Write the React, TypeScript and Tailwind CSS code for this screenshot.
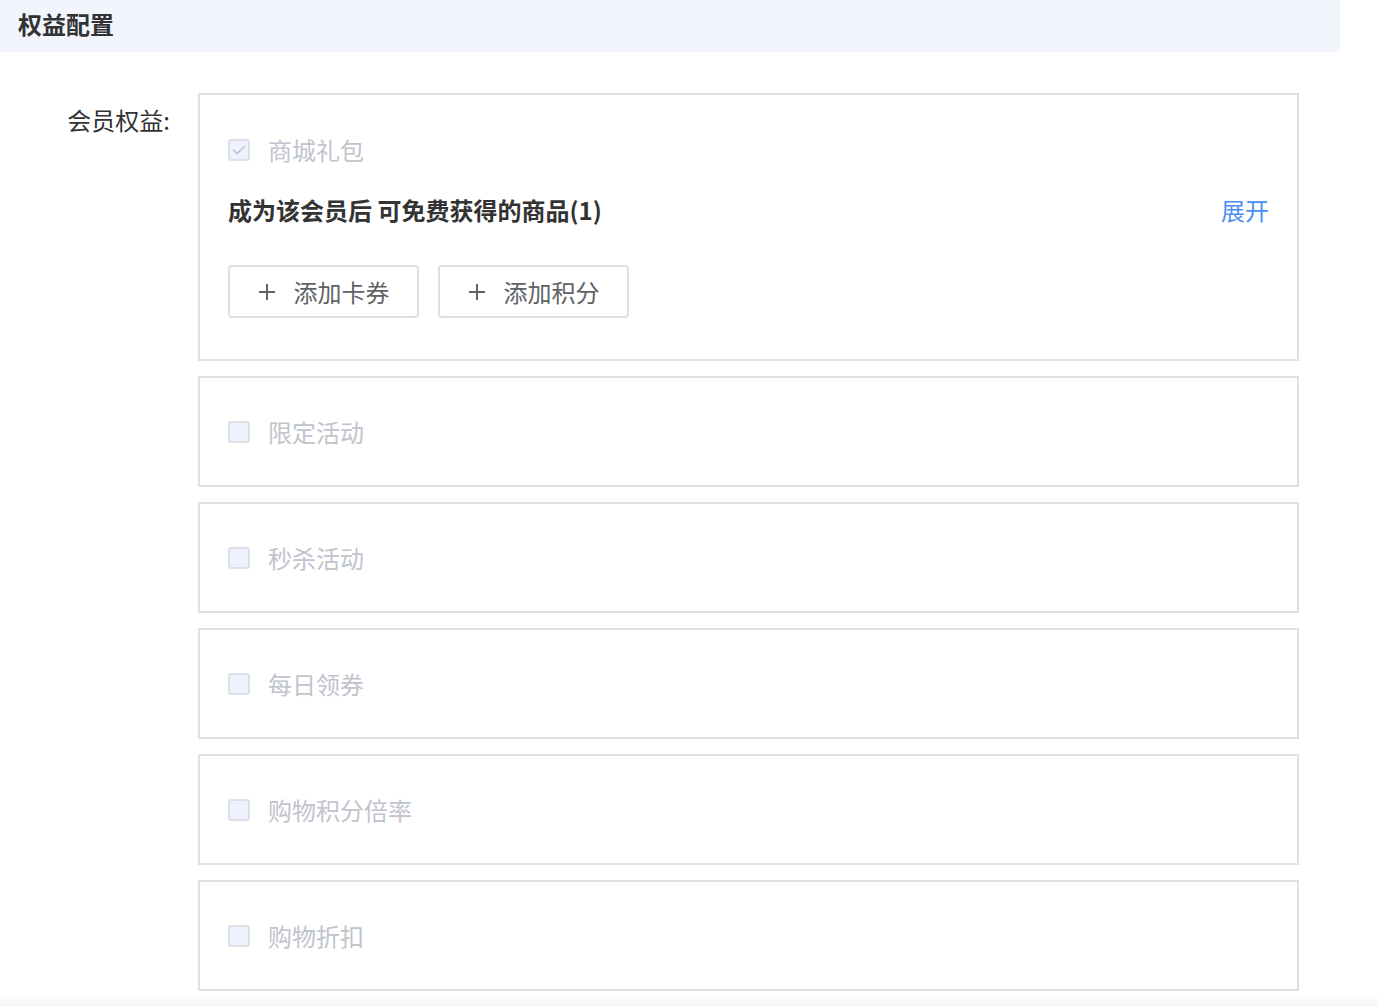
import React from "react";

const font = { fontFamily: '"Noto Sans CJK SC", "Noto Sans", sans-serif' };

function Checkbox({ checked }: { checked?: boolean }) {
  return (
    <span className="flex h-[22px] w-[22px] shrink-0 items-center justify-center rounded-[3px] border-2 border-[#dcdfe6] bg-[#edf2fc]">
      {checked && (
        <svg width="16" height="16" viewBox="0 0 16 16" fill="none">
          <path d="M2.5 8.2l3.5 3.3L13.5 4.5" stroke="#b8bcc4" strokeWidth="1.4" strokeLinecap="round" strokeLinejoin="round" />
        </svg>
      )}
    </span>
  );
}

function Plus() {
  return (
    <svg width="18" height="18" viewBox="0 0 18 18" fill="none">
      <path d="M9 1v16M1 9h16" stroke="#606266" strokeWidth="2" />
    </svg>
  );
}

function AddButton({ label }: { label: string }) {
  return (
    <button className="flex h-[53px] w-[191px] items-center justify-center gap-[18px] rounded-[4px] border-2 border-[#dcdfe6] bg-white text-[24px] leading-[32px] text-[#606266]">
      <Plus />
      <span>{label}</span>
    </button>
  );
}

function Row({ label }: { label: string }) {
  return (
    <div className="h-[111px] border-2 border-[#dfe1e6] pl-[28px] pt-[38px]">
      <div className="flex items-center gap-[18px]">
        <Checkbox />
        <span className="text-[24px] leading-[32px] text-[#c0c4cc]">{label}</span>
      </div>
    </div>
  );
}

export default function App() {
  return (
    <div style={font} className="relative h-[1006px] w-full overflow-hidden bg-white">
      <div className="flex h-[52px] w-[1340px] items-center bg-[#f2f6fc] pb-[4px] pl-[18px]">
        <span className="text-[24px] font-bold leading-[30px] text-[#333]">权益配置</span>
      </div>
      <div className="mt-[41px] flex">
        <div className="w-[170px] pt-[11px] text-right text-[24px] leading-[32px] text-[#333]">会员权益:</div>
        <div className="ml-[28px] flex w-[1101px] flex-col gap-[15px]">
          <div className="border-2 border-[#dfe1e6] pb-[41px] pl-[28px] pr-[28px] pt-[39px]">
            <div className="flex items-center gap-[18px]">
              <Checkbox checked />
              <span className="text-[24px] leading-[32px] text-[#c0c4cc]">商城礼包</span>
            </div>
            <div className="mt-[28px] flex items-center justify-between">
              <span className="text-[24px] font-bold leading-[32px] text-[#333]">成为该会员后 可免费获得的商品(1)</span>
              <span className="text-[24px] leading-[32px] text-[#4d8ef6]">展开</span>
            </div>
            <div className="mt-[39px] flex gap-[19px]">
              <AddButton label="添加卡券" />
              <AddButton label="添加积分" />
            </div>
          </div>
          <Row label="限定活动" />
          <Row label="秒杀活动" />
          <Row label="每日领券" />
          <Row label="购物积分倍率" />
          <Row label="购物折扣" />
        </div>
      </div>
      <div className="absolute bottom-0 left-0 h-[12px] w-full bg-gradient-to-b from-white to-[#f3f3f3]" />
    </div>
  );
}
